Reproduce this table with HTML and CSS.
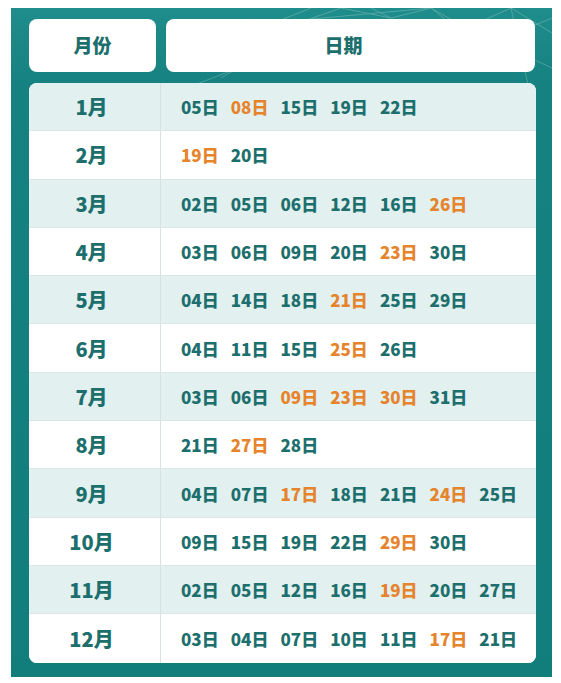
FILE: index.html
```html
<!DOCTYPE html>
<html lang="zh">
<head>
<meta charset="utf-8">
<title>日期表</title>
<link rel="stylesheet" href="styles.css">
</head>
<body>
<div class="panel">
  <svg class="pattern" width="541" height="90" viewBox="0 0 541 90" aria-hidden="true">
    <g stroke="#ffffff" stroke-width="1" fill="none" opacity="0.22">
      <path d="M230 35 L330 0 M250 20 L300 0 M380 10 L420 0 L455 20 L500 0 L541 25 M420 0 L470 40 L541 10 M455 20 L541 60 M500 0 L520 90 M330 0 L380 10 L360 0 M290 12 L420 0"/>
      <path d="M210 70 L260 40 M150 90 L240 55"/>
    </g>
  </svg>
  <div class="head">
    <div class="head-cell">月份</div>
    <div class="head-cell head-date">日期</div>
  </div>
  <div class="table">
    <div class="row alt"><div class="month">1月</div><div class="dates"><span>05日</span><span class="hl">08日</span><span>15日</span><span>19日</span><span>22日</span></div></div>
    <div class="row"><div class="month">2月</div><div class="dates"><span class="hl">19日</span><span>20日</span></div></div>
    <div class="row alt"><div class="month">3月</div><div class="dates"><span>02日</span><span>05日</span><span>06日</span><span>12日</span><span>16日</span><span class="hl">26日</span></div></div>
    <div class="row"><div class="month">4月</div><div class="dates"><span>03日</span><span>06日</span><span>09日</span><span>20日</span><span class="hl">23日</span><span>30日</span></div></div>
    <div class="row alt"><div class="month">5月</div><div class="dates"><span>04日</span><span>14日</span><span>18日</span><span class="hl">21日</span><span>25日</span><span>29日</span></div></div>
    <div class="row"><div class="month">6月</div><div class="dates"><span>04日</span><span>11日</span><span>15日</span><span class="hl">25日</span><span>26日</span></div></div>
    <div class="row alt"><div class="month">7月</div><div class="dates"><span>03日</span><span>06日</span><span class="hl">09日</span><span class="hl">23日</span><span class="hl">30日</span><span>31日</span></div></div>
    <div class="row"><div class="month">8月</div><div class="dates"><span>21日</span><span class="hl">27日</span><span>28日</span></div></div>
    <div class="row alt"><div class="month">9月</div><div class="dates"><span>04日</span><span>07日</span><span class="hl">17日</span><span>18日</span><span>21日</span><span class="hl">24日</span><span>25日</span></div></div>
    <div class="row"><div class="month">10月</div><div class="dates"><span>09日</span><span>15日</span><span>19日</span><span>22日</span><span class="hl">29日</span><span>30日</span></div></div>
    <div class="row alt"><div class="month">11月</div><div class="dates"><span>02日</span><span>05日</span><span>12日</span><span>16日</span><span class="hl">19日</span><span>20日</span><span>27日</span></div></div>
    <div class="row last"><div class="month">12月</div><div class="dates"><span>03日</span><span>04日</span><span>07日</span><span>10日</span><span>11日</span><span class="hl">17日</span><span>21日</span></div></div>
  </div>
</div>
</body>
</html>
```
FILE: styles.css
```css
html, body {
  margin: 0;
  padding: 0;
  background: #ffffff;
}
body {
  padding: 8px 0 0 11px;
  font-family: "Noto Sans CJK SC", "Noto Sans", sans-serif;
  font-weight: 900;
  color: #1c6f6c;
}
.panel {
  position: relative;
  width: 541px;
  height: 669px;
  box-sizing: border-box;
  padding: 11px 16px 0 18px;
  background: linear-gradient(180deg, #1f8d8b 0%, #158180 12%, #127e7c 100%);
  overflow: hidden;
}
.pattern {
  position: absolute;
  left: 0;
  top: 0;
}
.head {
  position: relative;
  display: grid;
  grid-template-columns: 127px 369px;
  column-gap: 10px;
  height: 53px;
}
.head-cell {
  background: #ffffff;
  border-radius: 8px;
  display: flex;
  align-items: center;
  justify-content: center;
  padding-bottom: 2px;
  box-sizing: border-box;
  font-size: 19px;
  color: #1c6f6c;
}
.head-date {
  padding-right: 14px;
}
.table {
  position: relative;
  margin-top: 11px;
  width: 507px;
  background: #ffffff;
  border-radius: 8px;
  overflow: hidden;
}
.row {
  display: grid;
  grid-template-columns: 132px 375px;
  height: 48.3px;
  box-sizing: border-box;
  border-bottom: 1px solid #dbe6e6;
  background: #ffffff;
}
.row.alt {
  background: #e2f0f0;
}
.row.last {
  border-bottom: none;
}
.month {
  display: flex;
  align-items: center;
  justify-content: center;
  padding-right: 6px;
  font-size: 20px;
  border-right: 1px solid #d6e2e2;
}
.dates {
  display: flex;
  align-items: center;
  padding-left: 20px;
  column-gap: 12px;
  font-size: 17px;
}
.dates span {
  white-space: nowrap;
}
.hl {
  color: #e5842c;
}
```
